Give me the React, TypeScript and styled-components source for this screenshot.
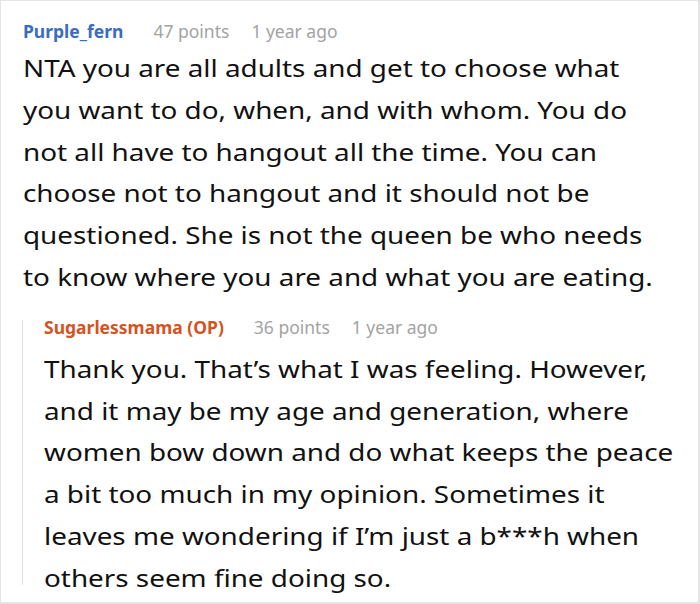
import styled, { createGlobalStyle } from 'styled-components';

const GlobalStyle = createGlobalStyle`
  html, body {
    margin: 0;
    padding: 0;
    background: #fff;
  }
  body {
    font-family: 'Noto Sans', 'Open Sans', sans-serif;
  }
`;

type CommentData = {
  author: string;
  op?: boolean;
  points: number;
  age: string;
  text: string;
  replies?: CommentData[];
};

const thread: CommentData = {
  author: 'Purple_fern',
  points: 47,
  age: '1 year ago',
  text: 'NTA you are all adults and get to choose what you want to do, when, and with whom. You do not all have to hangout all the time. You can choose not to hangout and it should not be questioned. She is not the queen be who needs to know where you are and what you are eating.',
  replies: [
    {
      author: 'Sugarlessmama (OP)',
      op: true,
      points: 36,
      age: '1 year ago',
      text: 'Thank you. That\u2019s what I was feeling. However, and it may be my age and generation, where women bow down and do what keeps the peace a bit too much in my opinion. Sometimes it leaves me wondering if I\u2019m just a b***h when others seem fine doing so.',
    },
  ],
};

function Comment({ data, nested }: { data: CommentData; nested?: boolean }) {
  return (
    <CommentBox $nested={nested}>
      <Meta>
        <Author $op={data.op}>{data.author}</Author>
        <Points>{data.points} points</Points>
        <Age>{data.age}</Age>
      </Meta>
      <Body $nested={nested}>{data.text}</Body>
      {data.replies?.map((r) => (
        <Comment key={r.author} data={r} nested />
      ))}
    </CommentBox>
  );
}

export default function App() {
  return (
    <>
      <GlobalStyle />
      <Frame>
        <Comment data={thread} />
      </Frame>
    </>
  );
}

const Frame = styled.div`
  box-sizing: border-box;
  width: 700px;
  height: 604px;
  border: 2px solid #e4e4e4;
  border-top-width: 1px;
  border-left-width: 1px;
  padding: 18px 0 0 22px;
  overflow: hidden;
`;

const CommentBox = styled.div<{ $nested?: boolean }>`
  position: relative;
  ${(p) =>
    p.$nested &&
    `
    margin-top: 17px;
    padding-left: 21px;
    &::before {
      content: '';
      position: absolute;
      left: -1px;
      top: 5px;
      bottom: 14px;
      width: 1px;
      background: #e0e0e0;
    }
  `}
`;

const Meta = styled.div`
  display: flex;
  align-items: baseline;
  font-size: 17.5px;
  line-height: 24px;
  color: #a3a3a3;
  white-space: nowrap;
`;

const Author = styled.span<{ $op?: boolean }>`
  font-weight: 700;
  color: ${(p) => (p.$op ? '#d4531f' : '#3a6cbf')};
  margin-right: 30px;
`;

const Points = styled.span`
  margin-right: 22px;
`;

const Age = styled.span``;

/* the body copy in the reference is drawn a little wider than its height */
const Body = styled.div<{ $nested?: boolean }>`
  width: ${(p) => (p.$nested ? 553 : 552)}px;
  font-size: 24px;
  line-height: 41.8px;
  color: #111;
  margin-top: ${(p) => (p.$nested ? 9 : 4)}px;
  transform: scaleX(1.16);
  transform-origin: left top;
`;
